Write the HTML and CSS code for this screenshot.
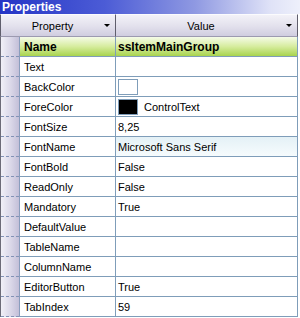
FILE: index.html
```html
<!DOCTYPE html>
<html>
<head>
	<meta charset="UTF-8">
	<title>Properties</title>
<link rel="stylesheet" href="styles.css">
</head>
<body>

<section class="panel">
	<div class="caption">Properties</div>
	<div class="grid">
		<div class="hdr">
			<div class="hcell"><span>Property</span><i class="arrow"></i></div>
			<div class="hcell"><span>Value</span><i class="arrow"></i></div>
		</div>
		<div class="row name">
			<div class="gut"></div>
			<div class="prop">Name</div>
			<div class="val">ssItemMainGroup</div>
		</div>
		<div class="row">
			<div class="gut"></div>
			<div class="prop">Text</div>
			<div class="val"></div>
		</div>
		<div class="row">
			<div class="gut"></div>
			<div class="prop">BackColor</div>
			<div class="val"><span class="swatch"></span></div>
		</div>
		<div class="row">
			<div class="gut"></div>
			<div class="prop">ForeColor</div>
			<div class="val"><span class="swatch black"></span>ControlText</div>
		</div>
		<div class="row">
			<div class="gut"></div>
			<div class="prop">FontSize</div>
			<div class="val">8,25</div>
		</div>
		<div class="row sel">
			<div class="gut"></div>
			<div class="prop">FontName</div>
			<div class="val">Microsoft Sans Serif</div>
		</div>
		<div class="row">
			<div class="gut"></div>
			<div class="prop">FontBold</div>
			<div class="val">False</div>
		</div>
		<div class="row">
			<div class="gut"></div>
			<div class="prop">ReadOnly</div>
			<div class="val">False</div>
		</div>
		<div class="row">
			<div class="gut"></div>
			<div class="prop">Mandatory</div>
			<div class="val">True</div>
		</div>
		<div class="row">
			<div class="gut"></div>
			<div class="prop">DefaultValue</div>
			<div class="val"></div>
		</div>
		<div class="row">
			<div class="gut"></div>
			<div class="prop">TableName</div>
			<div class="val"></div>
		</div>
		<div class="row">
			<div class="gut"></div>
			<div class="prop">ColumnName</div>
			<div class="val"></div>
		</div>
		<div class="row">
			<div class="gut"></div>
			<div class="prop">EditorButton</div>
			<div class="val">True</div>
		</div>
		<div class="row">
			<div class="gut"></div>
			<div class="prop">TabIndex</div>
			<div class="val">59</div>
		</div>
	</div>
</section>

</body>
</html>
```

FILE: styles.css
```css
body {
	margin: 0;
	background: #fff;
	font-family: "Liberation Sans", Arial, sans-serif;
	font-size: 11px;
	color: #000;
}
.panel {
	width: 300px;
}
.caption {
	height: 14px;
	line-height: 14px;
	padding-left: 2px;
	font-size: 12px;
	font-weight: bold;
	color: #fff;
	background: linear-gradient(to right, #2535c6 0%, #4c5cd6 35%, #8f99e2 65%, #dfe2f7 90%, #eef0fb 100%);
}
.grid {
	width: 298px;
}
.hdr {
	display: grid;
	grid-template-columns: 116px 182px;
	height: 23px;
}
.hcell {
	display: flex;
	align-items: center;
	padding: 0 5px 0 0;
	box-sizing: border-box;
	border-right: 1px solid #5f5e6c;
	border-top: 1px solid #fbfbfd;
	border-bottom: 1px solid #9c9ab0;
	background: linear-gradient(to bottom, #f3f2f8, #e2e0ec 55%, #d0cde0);
}
.hcell:first-child {
	border-left: 1px solid #5f5e6c;
}
.hcell span {
	flex: 1;
	text-align: center;
}
.arrow {
	width: 0;
	height: 0;
	border-left: 3px solid transparent;
	border-right: 3px solid transparent;
	border-top: 3px solid #000;
}
.row {
	display: grid;
	grid-template-columns: 20px 96px 182px;
	height: 20px;
}
.gut {
	box-sizing: border-box;
	border-left: 1px solid #6c6b78;
	border-right: 1px solid #8a9dbd;
	background:
		repeating-linear-gradient(to right, #8292b6 0 3px, transparent 3px 5px) bottom / 100% 1px no-repeat,
		linear-gradient(to right, #f1f0f8, #dad7e8 55%, #c3bfd8);
}
.prop,
.val {
	display: flex;
	align-items: center;
	box-sizing: border-box;
	border-right: 1px solid #7f9db9;
	border-bottom: 1px solid #7f9db9;
	white-space: nowrap;
}
.prop {
	padding-left: 4px;
}
.val {
	padding-left: 2px;
}
.name .prop,
.name .val {
	font-size: 12px;
	font-weight: bold;
	background: linear-gradient(to bottom, #f5fbe8, #d6ec9e 50%, #a8d44e);
}
.sel .val {
	background: linear-gradient(to bottom, #e4f1f6, #f6fbfd);
}
.swatch {
	width: 20px;
	height: 16px;
	box-sizing: border-box;
	border: 1px solid #7f9db9;
	background: #fff;
	margin-right: 6px;
}
.swatch.black {
	background: #000;
}
```
